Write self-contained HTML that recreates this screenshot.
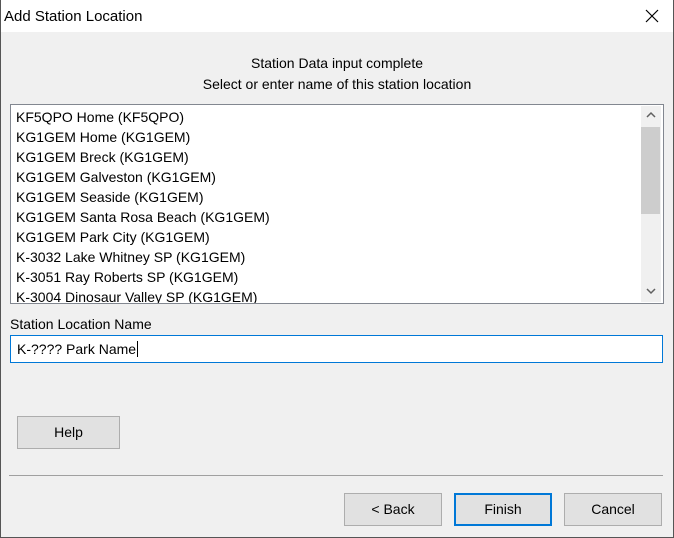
<!DOCTYPE html>
<html><head><style>
body{margin:0;width:674px;height:538px;overflow:hidden;background:#f0f0f0;font-family:"Liberation Sans",sans-serif;font-size:14px;color:#000;position:relative}
.a{position:absolute}
.title{left:0;top:0;width:674px;height:32px;background:#fff}
.btn{position:absolute;background:#e1e1e1;border:1px solid #adadad;box-sizing:border-box;text-align:center;line-height:30px}
.list{left:10px;top:104px;width:654px;height:200px;background:#fff;border:1px solid #828790;box-sizing:border-box;overflow:hidden}
.list div{height:20px;line-height:20px;padding-left:5px;white-space:nowrap}
</style></head><body>
<div class="a title"></div>
<div class="a" style="left:0;top:0;width:1px;height:538px;background:#555"></div>
<div class="a" style="right:0;top:0;width:1px;height:538px;background:#555"></div>
<div class="a" style="left:0;bottom:0;width:674px;height:1px;background:#555"></div>
<div class="a" style="left:4px;top:8px;font-size:15px">Add Station Location</div>
<svg class="a" style="left:645px;top:9px" width="14" height="14"><path d="M1 1L13 13M13 1L1 13" stroke="#000" stroke-width="1.2"/></svg>
<div class="a" style="left:0;top:55px;width:674px;text-align:center;font-size:14px">Station Data input complete</div>
<div class="a" style="left:0;top:76px;width:674px;text-align:center;font-size:14px">Select or enter name of this station location</div>
<div class="a list"><div style="padding-top:2px;height:20px">
KF5QPO Home (KF5QPO)</div><div>KG1GEM Home (KG1GEM)</div><div>KG1GEM Breck (KG1GEM)</div><div>KG1GEM Galveston (KG1GEM)</div><div>KG1GEM Seaside (KG1GEM)</div><div>KG1GEM Santa Rosa Beach (KG1GEM)</div><div>KG1GEM Park City (KG1GEM)</div><div>K-3032 Lake Whitney SP (KG1GEM)</div><div>K-3051 Ray Roberts SP (KG1GEM)</div><div>K-3004 Dinosaur Valley SP (KG1GEM)</div></div>
<div class="a" style="left:641px;top:106px;width:20px;height:196px;background:#f0f0f0"></div>
<div class="a" style="left:641px;top:127px;width:19px;height:87px;background:#cdcdcd"></div>
<svg class="a" style="left:645px;top:110px" width="12" height="10"><path d="M2 7L6 3L10 7" stroke="#606060" stroke-width="1.5" fill="none"/></svg>
<svg class="a" style="left:645px;top:286px" width="12" height="10"><path d="M2 3L6 7L10 3" stroke="#606060" stroke-width="1.5" fill="none"/></svg>
<div class="a" style="left:10px;top:316px">Station Location Name</div>
<div class="a" style="left:10px;top:335px;width:653px;height:28px;background:#fff;border:1px solid #0078d7;box-sizing:border-box;padding-left:6px;line-height:26px">K-???? Park Name<span style="border-left:1px solid #000;margin-left:1px"></span></div>
<div class="btn" style="left:17px;top:416px;width:103px;height:33px">Help</div>
<div class="a" style="left:9px;top:475px;width:654px;height:1px;background:#a0a0a0"></div>
<div class="btn" style="left:344px;top:493px;width:98px;height:33px">&lt; Back</div>
<div class="btn" style="left:454px;top:493px;width:98px;height:33px;border:2px solid #0078d7;line-height:29px">Finish</div>
<div class="btn" style="left:564px;top:493px;width:98px;height:33px">Cancel</div>
</body></html>
